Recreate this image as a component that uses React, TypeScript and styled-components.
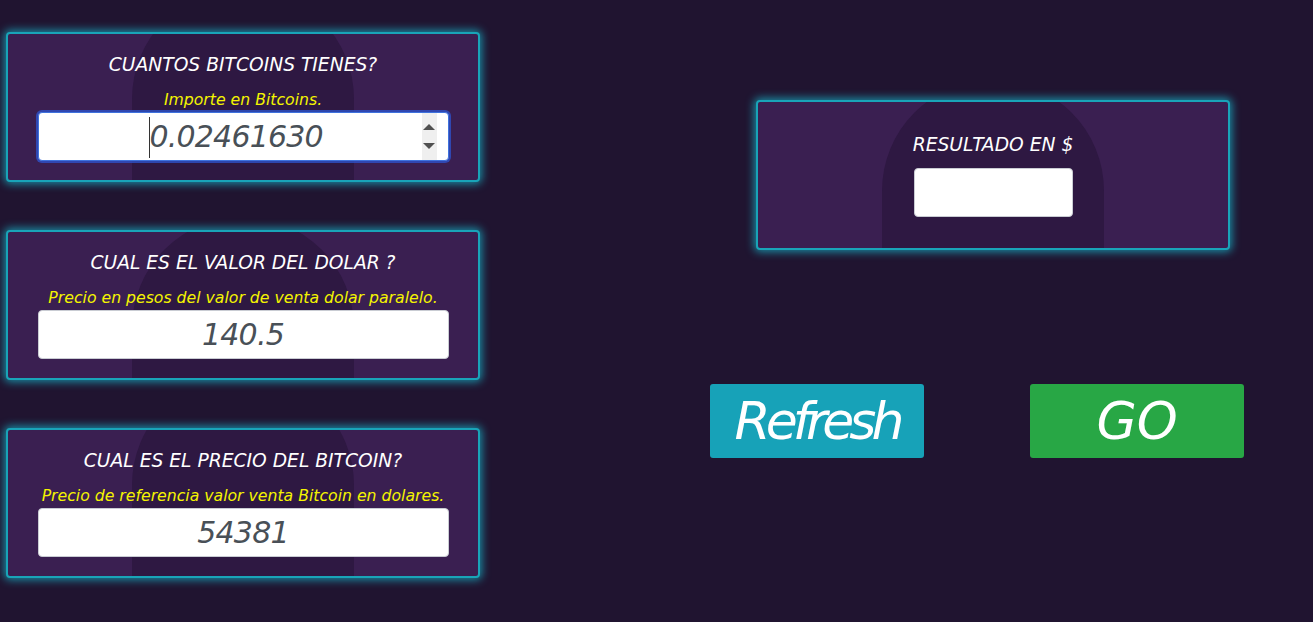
import React from "react";
import styled, { createGlobalStyle } from "styled-components";

const FONT = `"DejaVu Sans", "Noto Sans", sans-serif`;

const GlobalStyle = createGlobalStyle`
  html, body {
    margin: 0;
    padding: 0;
    background: #201430;
    height: 100%;
  }
  body {
    font-family: ${FONT};
    font-style: italic;
    overflow: hidden;
  }
`;

const Page = styled.div`
  display: flex;
  align-items: flex-start;
  gap: 230px;
  padding: 32px 0 0 6px;
  width: 1313px;
  height: 622px;
  box-sizing: border-box;
  background: #201430;
`;

const LeftColumn = styled.div`
  display: flex;
  flex-direction: column;
  gap: 48px;
`;

const RightColumn = styled.div`
  display: flex;
  flex-direction: column;
  padding-top: 68px;
`;

const Card = styled.section<{ $archTop: number; $padTop: number }>`
  position: relative;
  width: 474px;
  height: 150px;
  box-sizing: border-box;
  border: 2px solid #19a4b8;
  border-radius: 4px;
  background: #3a1f51;
  box-shadow: 0 0 9px 2px rgba(23, 180, 200, 0.75);
  overflow: hidden;
  display: flex;
  flex-direction: column;
  align-items: center;
  padding-top: ${(p) => p.$padTop}px;

  &::before {
    content: "";
    position: absolute;
    left: 124px;
    top: ${(p) => p.$archTop}px;
    width: 222px;
    height: 400px;
    border-radius: 111px 111px 0 0;
    background: #2e1842;
  }
`;

const ResultCard = styled(Card)`
  margin-left: 46px;
`;

const Title = styled.h2`
  position: relative;
  margin: 0;
  font-size: 18.7px;
  line-height: 25px;
  font-weight: 400;
  font-style: italic;
  color: #ffffff;
  white-space: nowrap;
`;

const Hint = styled.p`
  position: relative;
  margin: 13px 0 2px;
  font-size: 15.7px;
  line-height: 20px;
  font-style: italic;
  color: #f4f400;
  white-space: nowrap;
`;

const Field = styled.div<{ $width: number; $focused?: boolean }>`
  position: relative;
  width: ${(p) => p.$width}px;
  height: 49px;
  box-sizing: border-box;
  border-radius: 4px;
  background: #ffffff;
  border: 1px solid ${(p) => (p.$focused ? "#3f72dd" : "#c9ccd3")};
  box-shadow: ${(p) => (p.$focused ? "0 0 0 2px rgba(45, 85, 210, 0.75)" : "none")};
  display: flex;
  align-items: center;
`;

const NumberInput = styled.input<{ $indent?: number }>`
  flex: 1;
  min-width: 0;
  height: 100%;
  border: none;
  outline: none;
  background: transparent;
  padding: 0 0 0 ${(p) => p.$indent ?? 0}px;
  text-align: ${(p) => (p.$indent ? "left" : "center")};
  font-family: ${FONT};
  font-style: italic;
  font-size: 30px;
  letter-spacing: -0.8px;
  color: #495057;
`;

const Caret = styled.span`
  position: absolute;
  left: 110px;
  top: 4px;
  width: 1px;
  height: 41px;
  background: #333;
`;

const Spinner = styled.div`
  width: 15px;
  height: 100%;
  background: #efefef;
  margin-right: 11px;
  display: flex;
  flex-direction: column;
  align-items: center;
  justify-content: space-around;
  padding: 5px 0;
  box-sizing: border-box;
`;

const Arrow = styled.span<{ $down?: boolean }>`
  width: 0;
  height: 0;
  border-left: 6px solid transparent;
  border-right: 6px solid transparent;
  ${(p) =>
    p.$down
      ? "border-top: 6px solid #505050;"
      : "border-bottom: 6px solid #505050;"}
`;

const ResultTitle = styled(Title)`
  margin-bottom: 11px;
`;

const ButtonRow = styled.div`
  display: flex;
  gap: 106px;
  margin-top: 134px;
`;

const ActionButton = styled.button<{ $bg: string; $spacing: number }>`
  width: 214px;
  height: 74px;
  border: none;
  border-radius: 3px;
  background: ${(p) => p.$bg};
  color: #ffffff;
  font-family: ${FONT};
  font-style: italic;
  font-size: 52px;
  line-height: 74px;
  letter-spacing: ${(p) => p.$spacing}px;
  padding: 0;
  cursor: pointer;
`;

export default function App() {
  return (
    <>
      <GlobalStyle />
      <Page>
        <LeftColumn>
          <Card $archTop={-46} $padTop={18}>
            <Title>CUANTOS BITCOINS TIENES?</Title>
            <Hint>Importe en Bitcoins.</Hint>
            <Field $width={411} $focused>
              <Caret />
              <NumberInput readOnly value="0.02461630" $indent={111} />
              <Spinner>
                <Arrow />
                <Arrow $down />
              </Spinner>
            </Field>
          </Card>
          <Card $archTop={-15} $padTop={18}>
            <Title>CUAL ES EL VALOR DEL DOLAR ?</Title>
            <Hint>Precio en pesos del valor de venta dolar paralelo.</Hint>
            <Field $width={411}>
              <NumberInput readOnly value="140.5" />
            </Field>
          </Card>
          <Card $archTop={-56} $padTop={18}>
            <Title>CUAL ES EL PRECIO DEL BITCOIN?</Title>
            <Hint>Precio de referencia valor venta Bitcoin en dolares.</Hint>
            <Field $width={411}>
              <NumberInput readOnly value="54381" />
            </Field>
          </Card>
        </LeftColumn>
        <RightColumn>
          <ResultCard $archTop={-22} $padTop={30}>
            <ResultTitle>RESULTADO EN $</ResultTitle>
            <Field $width={159}>
              <NumberInput readOnly value="" />
            </Field>
          </ResultCard>
          <ButtonRow>
            <ActionButton $bg="#17a2b8" $spacing={-5}>Refresh</ActionButton>
            <ActionButton $bg="#28a745" $spacing={0}>GO</ActionButton>
          </ButtonRow>
        </RightColumn>
      </Page>
    </>
  );
}
